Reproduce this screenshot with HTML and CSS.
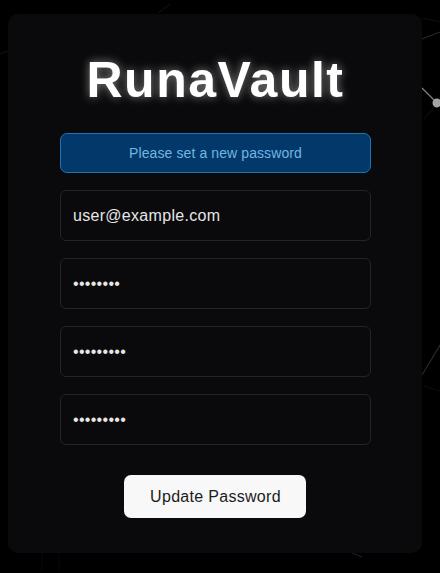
FILE: index.html
```html
<!DOCTYPE html>
<html lang="en">
<head>
    <meta charset="UTF-8">
    <meta name="viewport" content="width=device-width, initial-scale=1.0">
    <title>RunaVault</title>
    <link rel="stylesheet" href="styles.css">
</head>
<body>
    <!-- network background -->
    <svg class="network" width="440" height="573" viewBox="0 0 440 573">
        <g fill="none" stroke="#fff">
            <path d="M422 88 L437 103" stroke-opacity="0.5" stroke-width="1.2"/>
            <path d="M422 39 L440 32" stroke-opacity="0.18"/>
            <path d="M422 18 L440 22" stroke-opacity="0.06"/>
            <path d="M424 119 L437 104" stroke-opacity="0.07"/>
            <path d="M422 375 L440 345" stroke-opacity="0.16" stroke-width="1.2"/>
            <path d="M424 386 L440 391" stroke-opacity="0.05"/>
            <path d="M158 13 L170 4" stroke-opacity="0.08"/>
            <path d="M0 54 L8 51" stroke-opacity="0.08"/>
            <path d="M352 553 L362 557" stroke-opacity="0.14"/>
            <path d="M42 554 L42 572" stroke-opacity="0.03"/>
            <path d="M59 554 L59 572" stroke-opacity="0.03"/>
        </g>
        <circle cx="437" cy="103" r="4.5" fill="#a4a4a4"/>
    </svg>

    <div class="card">
        <h1 class="title">RunaVault</h1>
        <form class="form">
            <div class="alert">Please set a new password</div>
            <input class="field" type="email" value="user@example.com">
            <input class="field" type="password" value="12345678">
            <input class="field" type="password" value="123456789">
            <input class="field" type="password" value="123456789">
            <button class="submit-btn" type="button">Update Password</button>
        </form>
    </div>
</body>
</html>
```

FILE: styles.css
```css
html, body {
    height: 100%;
}
body {
    margin: 0;
    padding: 14px 18px 20px 8px;
    box-sizing: border-box;
    background-color: #000;
    font-family: "Liberation Sans", Arial, sans-serif;
    overflow: hidden;
}
.network {
    position: fixed;
    top: 0;
    left: 0;
}
.card {
    position: relative;
    height: 539px;
    box-sizing: border-box;
    padding: 36px 51px 0 52px;
    background-color: #0a0a0c;
    border-radius: 10px;
}
.title {
    margin: 0;
    height: 83px;
    font-size: 50px;
    line-height: 60px;
    font-weight: 700;
    letter-spacing: 1.5px;
    text-align: center;
    color: #fff;
    text-shadow: 0 0 10px rgba(255, 255, 255, 0.5);
}
.form {
    display: flex;
    flex-direction: column;
    gap: 17px;
}
.alert {
    height: 40px;
    box-sizing: border-box;
    border: 1px solid #1f74b0;
    border-radius: 7px;
    background-color: #03386a;
    color: #72b6e2;
    font-size: 14px;
    line-height: 38px;
    letter-spacing: 0.1px;
    text-align: center;
}
.field {
    height: 51px;
    box-sizing: border-box;
    padding: 0 12px;
    border: 1px solid #232427;
    border-radius: 6px;
    background-color: #0a0a0c;
    color: #e6e6e6;
    font-family: inherit;
    font-size: 16px;
    letter-spacing: 0.3px;
    outline: none;
}
.submit-btn {
    align-self: center;
    width: 182px;
    height: 43px;
    margin-top: 13px;
    margin-right: 2px;
    padding: 0 0 0 2px;
    border: none;
    border-radius: 7px;
    background-color: #f8f8f8;
    color: #1c1c1c;
    font-family: inherit;
    font-size: 16px;
    letter-spacing: 0.3px;
    cursor: pointer;
}
```
